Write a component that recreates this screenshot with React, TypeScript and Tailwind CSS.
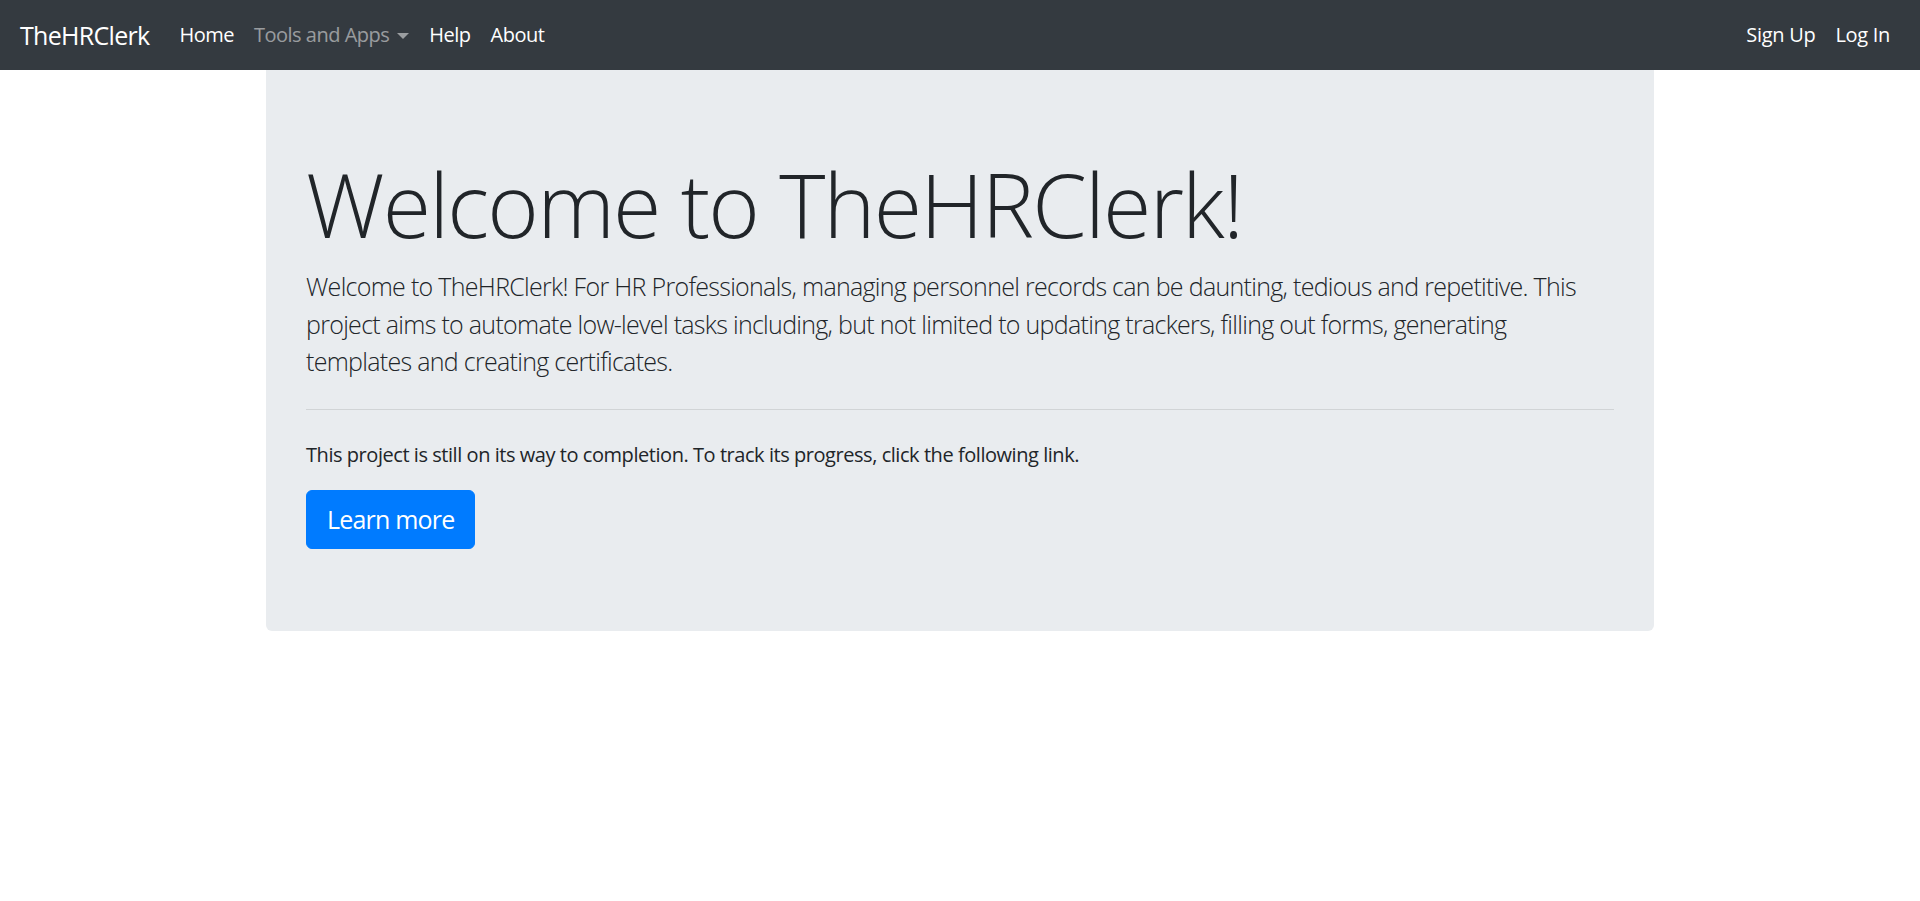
export default function App() {
  const font = { fontFamily: '"Open Sans", "Noto Sans", sans-serif' };

  return (
    <div className="min-h-screen bg-white text-[#212529]" style={font}>
      {/* Navbar */}
      <nav className="flex h-[70px] items-center justify-between bg-[#343a40] px-5">
        <div className="flex items-center">
          <a href="#" className="mr-5 py-[6px] text-[25px] leading-[37px] tracking-[-0.7px] text-white">
            TheHRClerk
          </a>
          <ul className="flex items-center text-[20px] leading-[30px] tracking-[-0.5px]">
            <li>
              <a href="#" className="block px-[10px] py-[10px] text-white">
                Home
              </a>
            </li>
            <li>
              <a href="#" className="flex items-center px-[10px] py-[10px] text-white/50">
                Tools and Apps
                <span className="ml-[8px] mt-[2px] inline-block h-0 w-0 border-x-[6px] border-t-[6px] border-x-transparent border-t-current" />
              </a>
            </li>
            <li>
              <a href="#" className="block px-[10px] py-[10px] text-white">
                Help
              </a>
            </li>
            <li>
              <a href="#" className="block px-[10px] py-[10px] text-white">
                About
              </a>
            </li>
          </ul>
        </div>
        <ul className="flex items-center text-[20px] leading-[30px] tracking-[-0.3px]">
          <li>
            <a href="#" className="block px-[10px] py-[10px] text-white">
              Sign Up
            </a>
          </li>
          <li>
            <a href="#" className="block px-[10px] py-[10px] text-white">
              Log In
            </a>
          </li>
        </ul>
      </nav>

      {/* Jumbotron */}
      <main className="mx-auto w-[1388px]">
        <section className="mb-10 rounded-b-[6px] bg-[#e9ecef] px-10 pt-[80px] pb-[82px]">
          <h1 className="mb-[10px] text-[88px] font-light leading-[108px] tracking-[-1.8px]">
            Welcome to TheHRClerk!
          </h1>
          <p className="mb-5 text-[25px] font-light leading-[37.5px] tracking-[-0.7px]">
            Welcome to TheHRClerk! For HR Professionals, managing personnel records can be daunting,
            tedious and repetitive. This project aims to automate low-level tasks including, but not
            limited to updating trackers, filling out forms, generating templates and creating
            certificates.
          </p>
          <hr className="mt-[28px] mb-[30px] border-t border-black/10" />
          <p className="mb-5 text-[20px] leading-[30px] tracking-[-0.45px]">
            This project is still on its way to completion. To track its progress, click the
            following link.
          </p>
          <div className="flex">
            <a
              href="#"
              className="rounded-[6px] border border-[#007bff] bg-[#007bff] px-5 py-[10px] text-[25px] leading-[37.5px] tracking-[-0.8px] text-white"
            >
              Learn more
            </a>
          </div>
        </section>
      </main>
    </div>
  );
}
